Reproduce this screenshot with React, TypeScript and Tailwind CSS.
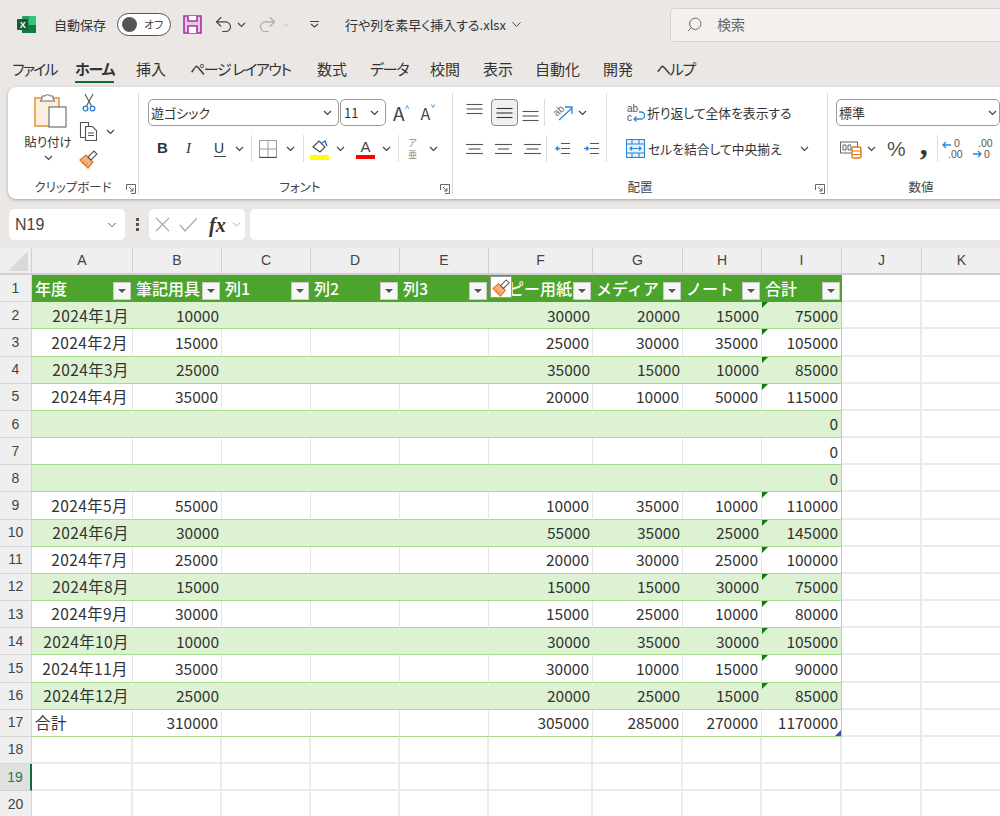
import { ChevronDown, Search, Undo2, Redo2 } from 'lucide-react'

const tabs = [
  { t: 'ファイル', w: 'w-[63px]', c: 'tracking-[-1.8px]' },
  { t: 'ホーム', w: 'w-[61px]', c: 'tracking-[-1.2px]' },
  { t: '挿入', w: 'w-[54px]', c: '' },
  { t: 'ページ レイアウト', w: 'w-[127px]', c: 'tracking-[-1.4px]' },
  { t: '数式', w: 'w-[53px]', c: '' },
  { t: 'データ', w: 'w-[60px]', c: 'tracking-[-1.2px]' },
  { t: '校閲', w: 'w-[53px]', c: '' },
  { t: '表示', w: 'w-[52px]', c: '' },
  { t: '自動化', w: 'w-[68px]', c: '' },
  { t: '開発', w: 'w-[53px]', c: '' },
  { t: 'ヘルプ', w: 'w-[60px]', c: 'tracking-[-1.4px]' },
]
const cols = ['A', 'B', 'C', 'D', 'E', 'F', 'G', 'H', 'I', 'J', 'K']
const heads = ['年度', '筆記用具', '列1', '列2', '列3', 'コピー用紙', 'メディア', 'ノート', '合計']

const rows: string[][] = [
  ['2024年1月', '10000', '', '', '', '30000', '20000', '15000', '75000'],
  ['2024年2月', '15000', '', '', '', '25000', '30000', '35000', '105000'],
  ['2024年3月', '25000', '', '', '', '35000', '15000', '10000', '85000'],
  ['2024年4月', '35000', '', '', '', '20000', '10000', '50000', '115000'],
  ['', '', '', '', '', '', '', '', '0'],
  ['', '', '', '', '', '', '', '', '0'],
  ['', '', '', '', '', '', '', '', '0'],
  ['2024年5月', '55000', '', '', '', '10000', '35000', '10000', '110000'],
  ['2024年6月', '30000', '', '', '', '55000', '35000', '25000', '145000'],
  ['2024年7月', '25000', '', '', '', '20000', '30000', '25000', '100000'],
  ['2024年8月', '15000', '', '', '', '15000', '15000', '30000', '75000'],
  ['2024年9月', '30000', '', '', '', '15000', '25000', '10000', '80000'],
  ['2024年10月', '10000', '', '', '', '30000', '35000', '30000', '105000'],
  ['2024年11月', '35000', '', '', '', '30000', '10000', '15000', '90000'],
  ['2024年12月', '25000', '', '', '', '20000', '25000', '15000', '85000'],
  ['合計', '310000', '', '', '', '305000', '285000', '270000', '1170000'],
]

function Chev({ className = '' }: { className?: string }) {
  return (
    <svg width="9" height="6" viewBox="0 0 9 6" className={className} fill="none" stroke="#444" strokeWidth="1.2">
      <path d="M1 1l3.500 3.500L8 1" />
    </svg>
  )
}

function Launcher() {
  return (
    <svg width="10" height="10" viewBox="0 0 10 10" fill="none" stroke="#666" strokeWidth="1">
      <path d="M.5 6V.5H9.500M9.500 .5V9.500H5M3 3l4 4M7 4v3H4" />
    </svg>
  )
}

function Lines({ w = [16, 16, 16], active = false }: { w?: number[]; active?: boolean }) {
  return (
    <svg width="17" height="12" viewBox="0 0 17 12" stroke={active ? '#333' : '#555'} strokeWidth="1.1">
      {w.map((x, i) => (
        <path key={i} d={`M${(17 - x) / 2} ${1.5 + i * 4.5}h${x}`} />
      ))}
    </svg>
  )
}

function Paste() {
  return (
    <svg width="36" height="36" viewBox="0 0 36 36" className="ml-[6px]">
      <rect x="2" y="5" width="24" height="28" fill="#fbeedd" stroke="#e8983a" strokeWidth="1.6" />
      <path d="M9 6V3h3a3 3 0 0 1 5 0h3v3l2 2H7z" fill="#fff" stroke="#666" strokeWidth="1" />
      <rect x="16" y="14" width="17" height="20" fill="#fff" stroke="#666" strokeWidth="1.1" />
    </svg>
  )
}

function Scissors() {
  return (
    <svg width="14" height="20" viewBox="0 0 14 20" fill="none">
      <path d="M3 1l6.500 12M11 1L4.500 13" stroke="#555" strokeWidth="1.1" />
      <circle cx="3.500" cy="15.500" r="2.300" stroke="#2b7cd3" strokeWidth="1.3" />
      <circle cx="10.500" cy="15.500" r="2.300" stroke="#2b7cd3" strokeWidth="1.3" />
    </svg>
  )
}

function Copy() {
  return (
    <svg width="20" height="20" viewBox="0 0 20 20" fill="#fff" stroke="#555" strokeWidth="1.1">
      <path d="M1.500 1.500h8v15h-8z" />
      <path d="M6.500 5.500h7l4 4v10h-11z" />
      <path d="M9 12h6M9 14.500h6" />
    </svg>
  )
}

function Brush({ size = 20 }: { size?: number }) {
  return (
    <svg width={size} height={size} viewBox="0 0 20 20">
      <path d="M1 11l6-5 7 7-5 6z" fill="#f4b183" stroke="#e07b1a" strokeWidth="1.2" />
      <path d="M3 15l3-3M6 17l3-3" stroke="#e07b1a" strokeWidth="1" />
      <path d="M9 8l6-6 3 3-6 6z" fill="#fff" stroke="#555" strokeWidth="1.1" />
    </svg>
  )
}

function Borders() {
  return (
    <svg width="18" height="18" viewBox="0 0 18 18" fill="none">
      <path d="M.5 .5h17v17H.5zM9 .5v17M.5 9h17" stroke="#999" strokeWidth="1" />
      <path d="M.5 17.500h17" stroke="#444" strokeWidth="1.2" />
    </svg>
  )
}

function Fill() {
  return (
    <svg width="20" height="22" viewBox="0 0 20 22" fill="none">
      <path d="M3 9l6-6 6 6-5 5z" fill="#fff" stroke="#444" strokeWidth="1.1" />
      <path d="M12 5l3-2 2 5" stroke="#1f6fb5" strokeWidth="1.4" />
      <rect x="0" y="17" width="19" height="5" fill="#ffff00" />
    </svg>
  )
}

function Wrap() {
  return (
    <svg width="19" height="20" viewBox="0 0 19 20" fill="none">
      <text x="1" y="9" fontSize="10" fill="#555" fontFamily="Liberation Sans">ab</text>
      <text x="1" y="18" fontSize="10" fill="#555" fontFamily="Liberation Sans">c</text>
      <path d="M13 9h2a3 3 0 0 1 0 7H8m2.500-2.500L8 16l2.500 2.500" stroke="#2b88d8" strokeWidth="1.3" />
    </svg>
  )
}

function Merge() {
  return (
    <svg width="19" height="19" viewBox="0 0 19 19" fill="#e5f1fb" stroke="#2b88d8" strokeWidth="1.1">
      <rect x=".5" y=".5" width="18" height="18" />
      <path d="M.5 5h18M.5 14h18M6 5V.5M13 5V.5M6 14v4.500M13 14v4.500" fill="none" />
      <path d="M4 9.500h11M6 7.500l-2 2 2 2M13 7.500l2 2-2 2" fill="none" />
    </svg>
  )
}

function Orient() {
  return (
    <svg width="24" height="20" viewBox="0 0 24 20" fill="none">
      <text x="2" y="11" fontSize="10" fill="#666" fontFamily="Liberation Sans" transform="rotate(-40 7 9)">ab</text>
      <path d="M7 17L20 5M13 4h7v7" stroke="#2b88d8" strokeWidth="1.3" />
    </svg>
  )
}

function Indent({ flip = false }: { flip?: boolean }) {
  return (
    <svg width="17" height="13" viewBox="0 0 17 13" fill="none" stroke="#555" strokeWidth="1">
      <path d="M7 1.500h9M7 6.500h9M7 11.500h9" />
      <path d={flip ? 'M1 6.500h4M3.500 4.500l2 2-2 2' : 'M2 6.500h4M4 4.500l-2 2 2 2'} stroke="#2b88d8" strokeWidth="1.3" />
    </svg>
  )
}

function Accounting() {
  return (
    <svg width="22" height="20" viewBox="0 0 22 20" fill="none">
      <rect x=".5" y="3" width="17" height="11" fill="#fff" stroke="#666" />
      <path d="M3 6h3v5H3zM8 6h3v5H8z" stroke="#666" strokeWidth="1" />
      <rect x="12" y="8" width="9" height="11" rx="2" fill="#fff" stroke="#e07b1a" strokeWidth="1.4" />
      <path d="M12 12h9M12 15.500h9" stroke="#e07b1a" />
    </svg>
  )
}

function Decimal({ more }: { more: boolean }) {
  return (
    <svg width="22" height="22" viewBox="0 0 22 22" fill="none">
      <path d={more ? 'M1 7h8M4 4L1 7l3 3' : 'M1 16h8M6 13l3 3-3 3'} stroke="#2b88d8" strokeWidth="1.3" />
      <text x={more ? 12 : 6} y="9" fontSize="10.5" fill="#555" fontFamily="Liberation Sans">{more ? '0' : '.00'}</text>
      <text x={more ? 6 : 12} y="20" fontSize="10.5" fill="#555" fontFamily="Liberation Sans">{more ? '.00' : '0'}</text>
    </svg>
  )
}

function FilterBtn() {
  return (
    <span className="absolute right-[2px] top-[7px] flex h-[18px] w-[18px] items-center justify-center border border-[#c9c9c9] bg-[#f6f6f6]">
      <span className="h-0 w-0 border-x-[4px] border-t-[4px] border-x-transparent border-t-[#555]" />
    </span>
  )
}

function GroupLabel({ text }: { text: string }) {
  return (
    <div className="relative mt-auto flex h-[14px] items-center justify-center whitespace-nowrap text-[12.5px] text-[#444]">
      {text}
      <span className="absolute right-[2px] top-[4px]">
        <Launcher />
      </span>
    </div>
  )
}

function Sep() {
  return <span className="h-[27px] w-px bg-[#dcdcdc]" />
}

export default function App() {
  return (
    <div className="relative flex h-[816px] w-[1000px] flex-col overflow-hidden bg-[#ebe7e4] font-['Noto_Sans_CJK_JP','Noto_Sans',sans-serif] text-[#333] [font-feature-settings:'palt']">
      {/* title bar */}
      <div className="flex h-[48px] shrink-0 items-center pl-[17px] pt-[1px]">
        <svg width="19" height="19" viewBox="0 0 19 19">
          <rect x="5" y="1" width="14" height="17" rx="1" fill="#21a366" />
          <rect x="12" y="1" width="7" height="9" fill="#33c481" />
          <rect x="5" y="10" width="14" height="8" fill="#107c41" />
          <rect x="0" y="4" width="11" height="11" rx="1" fill="#185c37" />
          <text x="2.800" y="13" fontSize="9" fontWeight="700" fill="#fff" fontFamily="Liberation Sans">X</text>
        </svg>
        <span className="ml-[18px] whitespace-nowrap text-[13px]">自動保存</span>
        <span className="ml-[11px] flex h-[23px] w-[54px] items-center rounded-full border border-[#555] bg-white pl-[4px]">
          <span className="h-[15px] w-[15px] rounded-full bg-[#555]" />
          <span className="ml-[7px] text-[11px] text-[#444]">オフ</span>
        </span>
        <svg width="19" height="19" viewBox="0 0 19 19" className="ml-[12px]" fill="#e5c6e5" stroke="#a4359f" strokeWidth="1.6">
          <path d="M1 1h17v17H1z" />
          <path d="M5 1v5h9V1M5 18v-7h9v7" fill="#fff" />
        </svg>
        <Undo2 size={21} strokeWidth={1.3} color="#444" className="ml-[11px]" />
        <Chev className="ml-[3px]" />
        <Redo2 size={21} strokeWidth={1.3} color="#aaa" className="ml-[11px]" />
        <ChevronDown size={10} color="#bbb" className="ml-[3px]" />
        <svg width="9" height="7" viewBox="0 0 9 7" className="ml-[19px]" fill="none" stroke="#444" strokeWidth="1.1">
          <path d="M0 .5h9M1 3l3.500 3L8 3" />
        </svg>
        <span className="ml-[26px] whitespace-nowrap text-[13px]">行や列を素早く挿入する.xlsx</span>
        <ChevronDown size={15} strokeWidth={1.4} className="ml-[3px]" />
        <div className="ml-auto flex h-[34px] w-[340px] translate-x-[10px] items-center rounded-[4px] border border-[#d5d1ce] bg-[#f3f0ee] pl-[15px] text-[14px] text-[#666]">
          <Search size={17} strokeWidth={1.3} className="-scale-x-100" />
          <span className="ml-[14px]">検索</span>
        </div>
      </div>

      {/* tabs */}
      <div className="flex h-[39px] shrink-0 items-start pl-[12px] pt-[9px] text-[15px] leading-[24px]">
        {tabs.map(({ t, w, c }) => (
          <span key={t} className={`${w} shrink-0 whitespace-nowrap`}>
            <span className={t === 'ホーム' ? `relative inline-block font-bold ${c} after:absolute after:-bottom-[2px] after:left-0 after:h-[2px] after:w-full after:bg-[#0e6b3b]` : c}>{t}</span>
          </span>
        ))}
      </div>

      {/* ribbon */}
      <div className="ml-[8px] flex h-[112px] w-[1010px] shrink-0 rounded-l-[8px] bg-white pb-[5px] pt-[6px] shadow-[0_1px_3px_rgba(0,0,0,0.3)]">
        {/* clipboard */}
        <div className="flex w-[131px] shrink-0 flex-col border-r border-[#dcdcdc]">
          <div className="flex">
            <div className="ml-[17px] flex w-[46px] flex-col items-center">
              <Paste />
              <span className="mt-[5px] whitespace-nowrap text-[12.5px] leading-[16px]">貼り付け</span>
              <Chev className="mt-[5px]" />
            </div>
            <div className="ml-[6px] flex w-[24px] flex-col items-center gap-[8px]">
              <Scissors />
              <Copy />
              <Brush />
            </div>
            <Chev className="ml-[5px] mt-[36px]" />
          </div>
          <GroupLabel text="クリップボード" />
        </div>

        {/* font */}
        <div className="flex w-[314px] shrink-0 flex-col border-r border-[#dcdcdc] pl-[9px]">
          <div className="mt-[6px] flex h-[27px] items-center">
            <div className="flex h-[27px] w-[191px] items-center justify-between rounded-[5px] border border-[#9a9a9a] px-[2px] pr-[6px] text-[13px]">
              遊ゴシック
              <Chev />
            </div>
            <div className="ml-[1px] flex h-[27px] w-[46px] items-center justify-between rounded-[5px] border border-[#9a9a9a] pl-[3px] pr-[6px] text-[13px]">
              11
              <Chev />
            </div>
            <span className="ml-[7px] text-[19px] leading-none text-[#444]">A</span>
            <span className="mb-[8px] text-[9px] leading-none text-[#2b88d8]">^</span>
            <span className="ml-[11px] text-[16px] leading-none text-[#444]">A</span>
            <span className="mb-[8px] text-[9px] leading-none text-[#2b88d8]">ˇ</span>
          </div>
          <div className="mt-[9px] flex h-[27px] items-center">
            <span className="ml-[9px] w-[12px] font-['Liberation_Sans',sans-serif] text-[15px] font-bold">B</span>
            <span className="ml-[17px] w-[10px] font-['Liberation_Serif',serif] text-[15px] italic">I</span>
            <span className="ml-[18px] w-[12px] border-b border-[#444] font-['Liberation_Sans',sans-serif] text-[14px] leading-[16px]">U</span>
            <Chev className="ml-[9px]" />
            <span className="ml-[7px] flex"><Sep /></span>
            <span className="ml-[7px] flex"><Borders /></span>
            <Chev className="ml-[9px]" />
            <span className="ml-[8px] flex"><Sep /></span>
            <span className="ml-[6px] flex"><Fill /></span>
            <Chev className="ml-[6px]" />
            <span className="ml-[11px] flex w-[19px] flex-col items-center">
              <span className="font-['Liberation_Sans',sans-serif] text-[15px] leading-[16px] text-[#444]">A</span>
              <span className="h-[4px] w-full bg-[#ff0000]" />
            </span>
            <Chev className="ml-[7px]" />
            <span className="ml-[7px] flex"><Sep /></span>
            <span className="ml-[9px] flex flex-col items-center text-[9px] leading-[12px] text-[#888]">
              <span>ア</span>
              <span>亜</span>
            </span>
            <Chev className="ml-[12px]" />
          </div>
          <GroupLabel text="フォント" />
        </div>

        {/* alignment */}
        <div className="flex w-[375px] shrink-0 flex-col border-r border-[#dcdcdc]">
          <div className="flex">
            <div className="flex w-[154px] flex-col border-r border-[#dcdcdc] pl-[13px]">
              <div className="mt-[6px] flex h-[27px] items-center">
                <span className="mb-[7px] flex"><Lines /></span>
                <span className="ml-[8px] flex h-[27px] w-[27px] items-center justify-center rounded-[4px] border border-[#8a8a8a] bg-[#f0f0f0]">
                  <Lines active />
                </span>
                <span className="ml-[4px] mt-[7px] flex"><Lines /></span>
                <span className="ml-[5px] flex"><Sep /></span>
                <span className="ml-[7px] flex"><Orient /></span>
                <Chev className="ml-[2px]" />
              </div>
              <div className="mt-[9px] flex h-[27px] items-center">
                <Lines w={[17, 12, 17]} />
                <span className="ml-[12px] flex"><Lines w={[17, 11, 17]} /></span>
                <span className="ml-[12px] flex"><Lines w={[17, 12, 17]} /></span>
                <span className="ml-[5px] flex"><Sep /></span>
                <span className="ml-[7px] flex"><Indent /></span>
                <span className="ml-[12px] flex"><Indent flip /></span>
              </div>
            </div>
            <div className="flex flex-col pl-[19px]">
              <div className="mt-[6px] flex h-[27px] items-center whitespace-nowrap text-[12.8px]">
                <Wrap />
                <span className="ml-[2px]">折り返して全体を表示する</span>
              </div>
              <div className="mt-[9px] flex h-[27px] items-center whitespace-nowrap text-[12.8px]">
                <Merge />
                <span className="ml-[3px]">セルを結合して中央揃え</span>
                <Chev className="ml-[18px]" />
              </div>
            </div>
          </div>
          <GroupLabel text="配置" />
        </div>

        {/* number */}
        <div className="flex w-[180px] shrink-0 flex-col pl-[8px]">
          <div className="mt-[6px] flex h-[27px] w-[164px] items-center justify-between rounded-[5px] border border-[#9a9a9a] pl-[2px] pr-[2px] text-[13px]">
            標準
            <Chev />
          </div>
          <div className="mt-[9px] flex h-[27px] items-center">
            <span className="ml-[4px] flex"><Accounting /></span>
            <Chev className="ml-[5px]" />
            <span className="ml-[11px] font-['Liberation_Sans',sans-serif] text-[21px] leading-none text-[#555]">%</span>
            <span className="ml-[14px] mb-[10px] font-['Liberation_Serif',serif] text-[32px] font-bold leading-[20px]">,</span>
            <span className="ml-[9px] flex"><Sep /></span>
            <span className="ml-[4px] flex"><Decimal more /></span>
            <span className="ml-[8px] flex"><Decimal more={false} /></span>
          </div>
          <div className="relative mt-auto flex h-[14px] w-[170px] items-center justify-center text-[12.5px] text-[#444]">
            数値
            <span className="absolute -right-[4px] top-[4px]"><Launcher /></span>
          </div>
        </div>
      </div>

      {/* formula bar */}
      <div className="mt-[10px] flex h-[31px] shrink-0 items-stretch pl-[9px]">
        <div className="flex w-[116px] items-center justify-between rounded-[5px] bg-white pl-[6px] pr-[6px] font-['Liberation_Sans',sans-serif] text-[16px] text-[#444]">
          N19
          <ChevronDown size={14} strokeWidth={1.5} />
        </div>
        <div className="flex w-[24px] flex-col items-center justify-center gap-[2px]">
          <span className="h-[3px] w-[3px] bg-[#555]" />
          <span className="h-[3px] w-[3px] bg-[#555]" />
          <span className="h-[3px] w-[3px] bg-[#555]" />
        </div>
        <div className="flex w-[96px] items-center rounded-[5px] bg-white pl-[6px]">
          <svg width="15" height="15" viewBox="0 0 15 15" stroke="#aaa" strokeWidth="1.2" fill="none">
            <path d="M1 1l13 13M14 1L1 14" />
          </svg>
          <svg width="20" height="15" viewBox="0 0 20 15" stroke="#aaa" strokeWidth="1.2" fill="none" className="ml-[9px]">
            <path d="M1 8l5 6L18 1" />
          </svg>
          <span className="ml-[10px] font-['Liberation_Serif',serif] text-[20px] font-bold italic leading-none text-[#333]">fx</span>
          <ChevronDown size={13} strokeWidth={1.3} color="#888" className="ml-[4px]" />
        </div>
        <div className="ml-[5px] flex-1 rounded-l-[5px] bg-white" />
      </div>

      {/* sheet */}
      <div className="mt-[8px] grid min-h-0 w-[1002px] flex-1 grid-cols-[32px_101px_89px_89px_89px_89px_104px_90px_79px_80px_80px_80px] auto-rows-[27.17px] content-start bg-white text-[15.5px] [font-feature-settings:normal]">
        <div className="relative col-start-1 border-b-2 border-r border-[#cfcfcf] bg-[#efefef]">
          <span className="absolute bottom-[2px] right-[3px] h-0 w-0 border-b-[20px] border-l-[20px] border-b-[#d9d9d9] border-l-transparent" />
        </div>
        {cols.map((c) => (
          <div key={c} className="flex items-center justify-center border-b-2 border-r border-[#cfcfcf] bg-[#efefef] font-['Liberation_Sans',sans-serif] text-[14px] text-[#444]">
            {c}
          </div>
        ))}

        {/* header row of the table */}
        <RowNum n={1} />
        {heads.map((h) => (
          <div key={h} className="relative overflow-hidden whitespace-nowrap bg-[#4ca42d] pl-[3px] text-[16px] font-medium leading-[26px] text-white">
            {h}
            <FilterBtn />
          </div>
        ))}
        <Blank />
        <Blank />

        {rows.map((r, i) => {
          const band = i % 2 === 0 && i < 15
          return (
            <RowCells key={i} n={i + 2} cells={r} band={band} />
          )
        })}

        {[18, 19, 20].map((n) => (
          <BlankRow key={n} n={n} />
        ))}
      </div>

      {/* format painter cursor over the F1 header */}
      <div className="absolute left-[490px] top-[276px] flex h-[22px] w-[22px] items-center justify-center border border-[#999] bg-white">
        <Brush size={19} />
      </div>
    </div>
  )
}

function RowNum({ n }: { n: number }) {
  if (n === 19) {
    return (
      <div className="flex items-center justify-center border-b border-r-2 border-b-[#cfcfcf] border-r-[#0e6b3b] bg-[#e0e0e0] font-['Liberation_Sans',sans-serif] text-[14px] text-[#1f7a4d]">
        {n}
      </div>
    )
  }
  return (
    <div className="flex items-center justify-center border-b border-r border-[#d4d4d4] bg-[#efefef] font-['Liberation_Sans',sans-serif] text-[14px] text-[#444]">
      {n}
    </div>
  )
}

function Blank() {
  return <div className="border-b-2 border-r-2 border-[#ebebeb]" />
}

function BlankRow({ n }: { n: number }) {
  return (
    <>
      <RowNum n={n} />
      {cols.map((c) => (
        <Blank key={c} />
      ))}
    </>
  )
}

function RowCells({ n, cells, band }: { n: number; cells: string[]; band: boolean }) {
  return (
    <>
      <RowNum n={n} />
      {cells.map((v, i) => {
        const left = i === 0 && v === '合計'
        const base = 'relative flex items-center whitespace-nowrap border-b border-b-[#a9dd8e] text-[#333]'
        const fill = band ? 'bg-[#dcf2d2]' : i === 8 ? 'border-r border-r-[#a9dd8e] bg-white' : 'border-r border-r-[#e6e6e6] bg-white'
        const edge = band && i === 8 ? 'border-r border-r-[#a9dd8e]' : ''
        const corner = i === 8 && v !== '0' && n !== 17
        const pad = i === 0 ? 'pr-[4px] tracking-[0.4px]' : 'pr-[3px]'
        return (
          <div key={i} className={`${base} ${fill} ${edge} ${pad} ${left ? 'justify-start pl-[3px]' : 'justify-end'}`}>
            {corner && <span className="absolute left-0 top-0 h-0 w-0 border-r-[6px] border-t-[6px] border-r-transparent border-t-[#107c10]" />}
            {v}
            {n === 17 && i === 8 && <span className="absolute bottom-0 right-0 h-0 w-0 border-b-[6px] border-l-[6px] border-b-[#3f4db5] border-l-transparent" />}
          </div>
        )
      })}
      <Blank />
      <Blank />
    </>
  )
}
